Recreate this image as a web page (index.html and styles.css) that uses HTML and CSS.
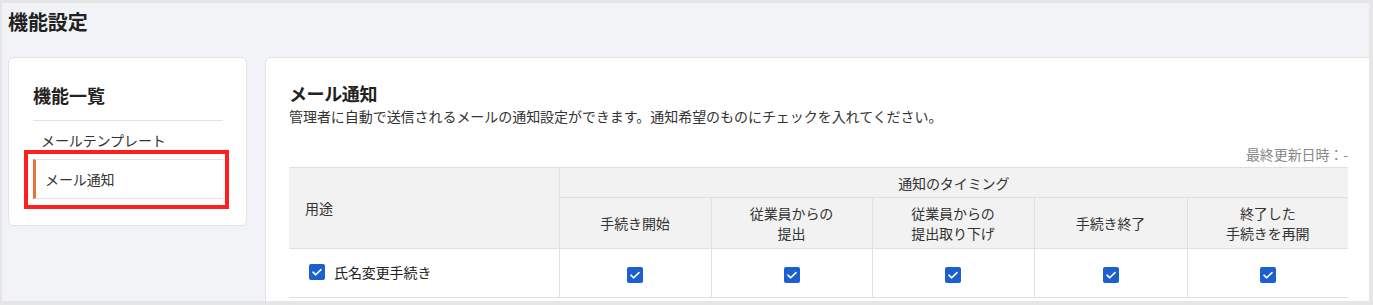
FILE: index.html
```html
<!DOCTYPE html>
<html lang="ja">
<head>
<meta charset="utf-8">
<title>機能設定</title>
<link rel="stylesheet" href="styles.css">
</head>
<body>
<div class="page">
  <h1 class="page-title">機能設定</h1>
  <div class="layout">
    <aside class="side-card">
      <h2 class="side-title">機能一覧</h2>
      <ul class="side-list">
        <li class="side-item">メールテンプレート</li>
        <li class="side-item active">メール通知<span class="highlight"></span></li>
      </ul>
    </aside>
    <main class="main-card">
      <h2 class="main-title">メール通知</h2>
      <p class="main-desc">管理者に自動で送信されるメールの通知設定ができます。通知希望のものにチェックを入れてください。</p>
      <div class="updated">最終更新日時：-</div>
      <table class="notify-table">
        <colgroup>
          <col class="c-use">
          <col class="c1">
          <col class="c2">
          <col class="c3">
          <col class="c4">
          <col class="c5">
        </colgroup>
        <thead>
          <tr class="hrow1">
            <th class="th-use" rowspan="2">用途</th>
            <th colspan="5">通知のタイミング</th>
          </tr>
          <tr class="hrow2">
            <th>手続き開始</th>
            <th>従業員からの<br>提出</th>
            <th>従業員からの<br>提出取り下げ</th>
            <th>手続き終了</th>
            <th>終了した<br>手続きを再開</th>
          </tr>
        </thead>
        <tbody>
          <tr class="brow">
            <td class="td-use"><span class="use-label"><span class="cb"><svg viewBox="0 0 16 16"><path d="M4 8.2l2.7 2.6L12 5.6" fill="none" stroke="#fff" stroke-width="1.6" stroke-linecap="round" stroke-linejoin="round"/></svg></span>氏名変更手続き</span></td>
            <td><span class="cb"><svg viewBox="0 0 16 16"><path d="M4 8.2l2.7 2.6L12 5.6" fill="none" stroke="#fff" stroke-width="1.6" stroke-linecap="round" stroke-linejoin="round"/></svg></span></td>
            <td><span class="cb"><svg viewBox="0 0 16 16"><path d="M4 8.2l2.7 2.6L12 5.6" fill="none" stroke="#fff" stroke-width="1.6" stroke-linecap="round" stroke-linejoin="round"/></svg></span></td>
            <td><span class="cb"><svg viewBox="0 0 16 16"><path d="M4 8.2l2.7 2.6L12 5.6" fill="none" stroke="#fff" stroke-width="1.6" stroke-linecap="round" stroke-linejoin="round"/></svg></span></td>
            <td><span class="cb"><svg viewBox="0 0 16 16"><path d="M4 8.2l2.7 2.6L12 5.6" fill="none" stroke="#fff" stroke-width="1.6" stroke-linecap="round" stroke-linejoin="round"/></svg></span></td>
            <td><span class="cb"><svg viewBox="0 0 16 16"><path d="M4 8.2l2.7 2.6L12 5.6" fill="none" stroke="#fff" stroke-width="1.6" stroke-linecap="round" stroke-linejoin="round"/></svg></span></td>
          </tr>
        </tbody>
      </table>
    </main>
  </div>
</div>
</body>
</html>
```

FILE: styles.css
```css
html, body {
  margin: 0;
  padding: 0;
}
body {
  background: #e6e6e6;
  font-family: "Noto Sans CJK JP", "Noto Sans", sans-serif;
  color: #333;
  width: 1373px;
  height: 305px;
  overflow: hidden;
}
.page {
  margin: 3px 4px 0 2px;
  height: 298px;
  background: #f2f3f7;
  overflow: hidden;
  padding: 0 0 0 6px;
  box-sizing: border-box;
}
.page-title {
  margin: 0;
  padding-top: 5px;
  font-size: 20px;
  line-height: 28px;
  font-weight: 700;
  color: #222;
  letter-spacing: -0.1px;
}
.layout {
  display: flex;
  align-items: flex-start;
  gap: 18px;
  margin-top: 21px;
}
.side-card {
  width: 239px;
  box-sizing: border-box;
  background: #fff;
  border: 1px solid #e1e3e8;
  border-radius: 6px;
  padding: 24px 23px 26px 24px;
  flex-shrink: 0;
}
.side-title {
  margin: 0;
  font-size: 18px;
  line-height: 26px;
  font-weight: 700;
  color: #222;
  padding-bottom: 12px;
  border-bottom: 1px solid #e1e1e6;
}
.side-list {
  list-style: none;
  margin: 0;
  padding: 0;
}
.side-item {
  font-size: 14px;
  letter-spacing: -0.1px;
  line-height: 38px;
  padding-left: 8px;
  color: #333;
}
.side-item.active {
  position: relative;
  line-height: 38px;
  border-top: 1px solid #e1e1e6;
  border-bottom: 1px solid #e1e1e6;
  border-left: 3px solid #e8743b;
  padding-left: 9px;
}
.highlight {
  position: absolute;
  left: -12px;
  top: -10px;
  right: -6px;
  bottom: -11px;
  border: 4px solid #ff1f1f;
}
.main-card {
  flex: 1;
  background: #fff;
  border: 1px solid #e1e3e8;
  border-radius: 6px;
  margin-right: -10px;
  min-height: 260px;
  padding: 22px 30px 0 23px;
}
.main-title {
  margin: 0;
  font-size: 18px;
  line-height: 26px;
  font-weight: 700;
  color: #222;
  letter-spacing: -0.4px;
}
.main-desc {
  margin: 0;
  font-size: 14px;
  line-height: 20px;
  letter-spacing: -0.05px;
  color: #333;
}
.updated {
  text-align: right;
  font-size: 14px;
  line-height: 20px;
  letter-spacing: -0.1px;
  color: #888;
  margin-top: 18px;
  margin-bottom: 3px;
}
.notify-table {
  width: 100%;
  border-collapse: collapse;
  table-layout: fixed;
  font-size: 14px;
  letter-spacing: -0.1px;
}
.c-use { width: 270px; }
.c1 { width: 152px; }
.c2 { width: 161px; }
.c3 { width: 162px; }
.c4 { width: 153px; }
.notify-table th {
  background: #f2f2f2;
  font-weight: 400;
  color: #333;
  line-height: 20px;
  border-top: 1px solid #e0e0e0;
  border-left: 1px solid #e0e0e0;
  border-bottom: 1px solid #e0e0e0;
  text-align: center;
  padding: 0 4px;
}
.notify-table th.th-use {
  text-align: left;
  border-left: none;
  padding-left: 16px;
}
.hrow1 th { height: 29px; }
.hrow2 th { height: 50px; }
.notify-table td {
  height: 48px;
  border-bottom: 1px solid #e0e0e0;
  border-left: 1px solid #e0e0e0;
  text-align: center;
  vertical-align: middle;
  padding: 0;
}
.notify-table td.td-use {
  border-left: none;
  text-align: left;
  padding-left: 20px;
}
.use-label {
  display: inline-flex;
  align-items: center;
  gap: 9px;
  color: #222;
}
.cb {
  display: inline-block;
  width: 16px;
  height: 16px;
  background: #1b5fd1;
  border-radius: 2px;
  vertical-align: middle;
}
.cb svg {
  display: block;
  width: 16px;
  height: 16px;
}
```
